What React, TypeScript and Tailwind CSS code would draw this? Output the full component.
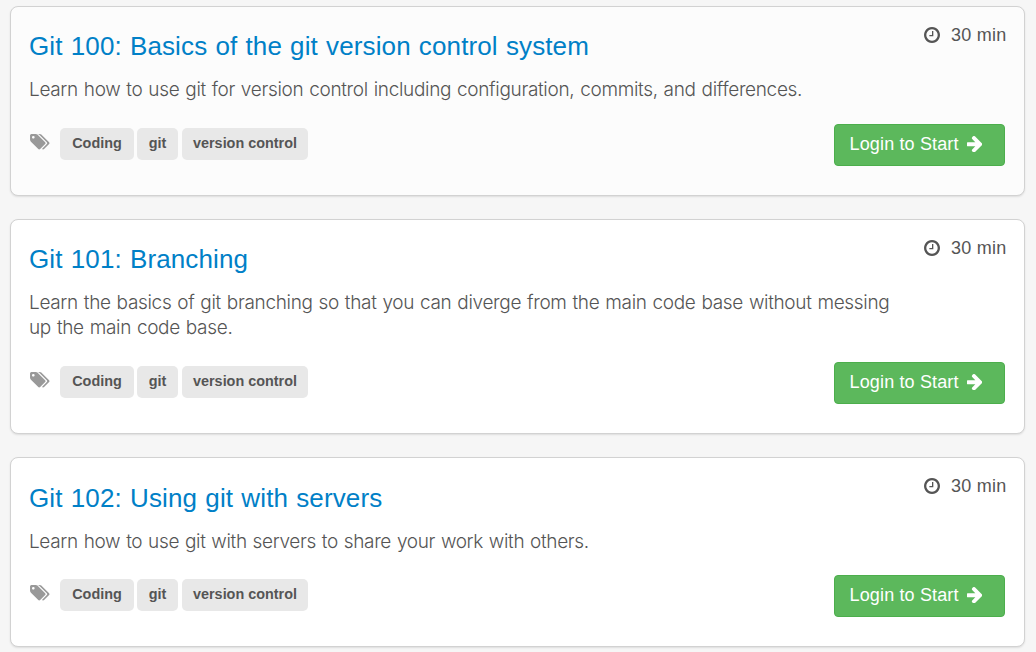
type Course = {
  title: string;
  titleClass: string;
  lines: { text: string; className: string }[];
  cardClass: string;
  bodyClass: string;
};

const courses: Course[] = [
  {
    title: 'Git 100: Basics of the git version control system',
    titleClass: 'tracking-[0.12px]',
    lines: [
      {
        text: 'Learn how to use git for version control including configuration, commits, and differences.',
        className: 'tracking-[-0.33px]',
      },
    ],
    cardClass: 'h-[190px] bg-[#fcfcfc]',
    bodyClass: 'pt-[23px]',
  },
  {
    title: 'Git 101: Branching',
    titleClass: 'tracking-[0.12px]',
    lines: [
      {
        text: 'Learn the basics of git branching so that you can diverge from the main code base without messing',
        className: 'tracking-[-0.33px]',
      },
      { text: 'up the main code base.', className: 'tracking-[-0.33px]' },
    ],
    cardClass: 'h-[215px] bg-white',
    bodyClass: 'pt-[23px]',
  },
  {
    title: 'Git 102: Using git with servers',
    titleClass: 'tracking-[0.13px]',
    lines: [
      {
        text: 'Learn how to use git with servers to share your work with others.',
        className: 'tracking-[-0.35px]',
      },
    ],
    cardClass: 'h-[190px] bg-white',
    bodyClass: 'pt-[24px]',
  },
];

function TagsIcon() {
  return (
    <svg viewBox="128 128 1899 1515" className="mt-[6px] ml-px h-[15.5px] w-[19.5px] shrink-0 fill-[#999]">
      <path d="M576 448q0-53-37.5-90.5t-90.5-37.5-90.5 37.5-37.5 90.5 37.5 90.5 90.5 37.5 90.5-37.5 37.5-90.5zm1067 576q0 53-37 90l-491 492q-39 37-91 37-53 0-90-37l-715-716q-38-37-64.5-101t-26.5-117v-416q0-52 38-90t90-38h416q53 0 117 26.5t102 64.5l715 714q37 39 37 91zm384 0q0 53-37 90l-491 492q-39 37-91 37-36 0-59-14t-53-45l470-470q37-37 37-90 0-52-37-91l-715-714q-38-38-102-64.5t-117-26.5h224q53 0 117 26.5t102 64.5l715 714q37 39 37 91z" />
    </svg>
  );
}

function ClockIcon() {
  return (
    <svg viewBox="128 128 1536 1536" className="h-4 w-4 shrink-0 fill-[#555]">
      <path d="M1024 544v448q0 14-9 23t-23 9h-320q-14 0-23-9t-9-23v-64q0-14 9-23t23-9h224v-352q0-14 9-23t23-9h64q14 0 23 9t9 23zm416 352q0-148-73-273t-198-198-273-73-273 73-198 198-73 273 73 273 198 198 273 73 273-73 198-198 73-273zm224 0q0 209-103 385.5t-279.5 279.5-385.5 103-385.5-103-279.5-279.5-103-385.5 103-385.5 279.5-279.5 385.5-103 385.5 103 279.5 279.5 103 385.5z" />
    </svg>
  );
}

function ArrowIcon() {
  return (
    <svg viewBox="192 186 1408 1553" className="h-[16.5px] w-[15.5px] shrink-0 fill-white">
      <path d="M1600 960q0 54-37 91l-651 651q-39 37-91 37-51 0-90-37l-75-75q-38-38-38-91t38-91l293-293h-704q-52 0-84.5-37.5t-32.5-90.5v-128q0-53 32.5-90.5t84.5-37.5h704l-293-294q-38-36-38-90t38-90l75-75q38-38 90-38 53 0 91 38l651 651q37 35 37 90z" />
    </svg>
  );
}

function Tag({ label, className }: { label: string; className: string }) {
  return (
    <span
      className={`flex h-8 items-center justify-center rounded-[5px] bg-[#e8e8e8] pb-px text-[14.4px] leading-[21px] font-bold whitespace-nowrap text-[#555] ${className}`}
    >
      {label}
    </span>
  );
}

function CourseCard({ course }: { course: Course }) {
  return (
    <article
      className={`flex rounded-[8px] border border-[#d2d2d2] pr-[17px] pl-[18px] shadow-[0_1px_2px_rgba(0,0,0,0.1)] ${course.cardClass}`}
    >
      <div className={`flex min-w-0 flex-1 flex-col pb-[35px] ${course.bodyClass}`}>
        <h2
          className={`h-8 text-[26px] leading-8 whitespace-nowrap text-[#0080c7] [word-spacing:0.8px] ${course.titleClass}`}
        >
          {course.title}
        </h2>
        <div className="mt-[15px] font-[Inter,sans-serif] text-[19px] leading-[25px] font-light text-[#555] [word-spacing:0.9px]">
          {course.lines.map((line) => (
            <p key={line.text} className={`whitespace-nowrap ${line.className}`}>
              {line.text}
            </p>
          ))}
        </div>
        <div className="mt-auto flex">
          <TagsIcon />
          <Tag label="Coding" className="ml-[10.5px] w-[74px]" />
          <Tag label="git" className="ml-[3px] w-[41px]" />
          <Tag label="version control" className="ml-1 w-[126px]" />
        </div>
      </div>
      <div className="flex shrink-0 flex-col items-end pt-4 pb-[29px]">
        <div className="flex h-6 items-center text-[#555]">
          <ClockIcon />
          <span className="mr-[0.5px] ml-[10.5px] text-[18px] leading-6 tracking-[0.25px] whitespace-nowrap">30 min</span>
        </div>
        <button className="mt-auto mr-[2px] flex h-[42px] w-[171px] items-center rounded-[4px] border border-[#4cae4c] bg-[#5cb85c] pb-[2px] pl-[14.5px] text-[18px] tracking-[0.15px] whitespace-nowrap text-white">
          Login to Start
          <span className="ml-2">
            <ArrowIcon />
          </span>
        </button>
      </div>
    </article>
  );
}

export default function App() {
  return (
    <main className="flex h-[652px] flex-col gap-[23px] overflow-hidden bg-[#f6f6f6] pt-[6px] pr-[11px] pl-[10px] font-['Liberation_Sans',Arial,sans-serif]">
      {courses.map((course) => (
        <CourseCard key={course.title} course={course} />
      ))}
    </main>
  );
}
